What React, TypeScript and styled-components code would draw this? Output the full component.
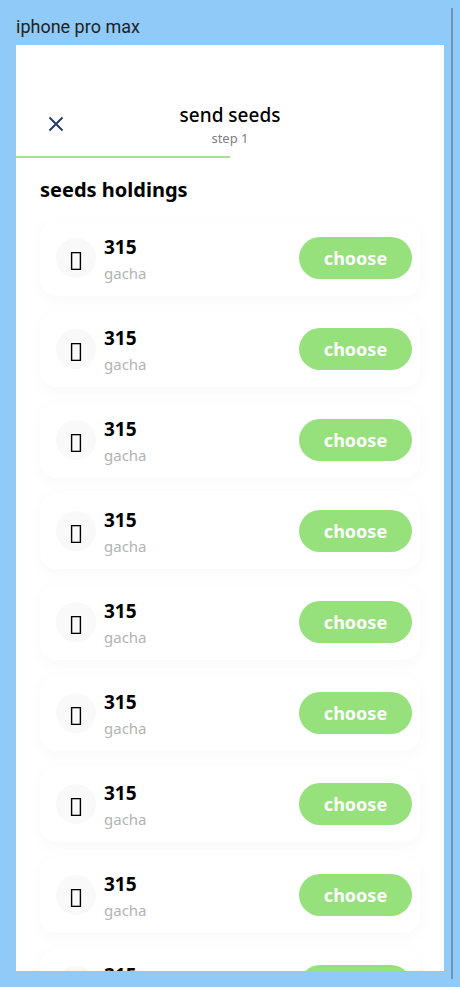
import React from "react";
import styled, { createGlobalStyle } from "styled-components";

const GlobalStyle = createGlobalStyle`
  *, *::before, *::after { box-sizing: border-box; }
  html, body { margin: 0; background: #90caf9; }
  body { font-family: "Noto Sans", "Open Sans", sans-serif; color: #000; }
  h1, h2, p, ul { margin: 0; padding: 0; }
`;

const Canvas = styled.div`
  height: 100vh;
  padding: 8px 7px 8px 8px;
`;

const Frame = styled.section`
  display: flex;
  flex-direction: column;
  height: 100%;
  padding: 8px 7px 8px 8px;
  border-right: 2px solid #6d95b8;
`;

const FrameLabel = styled.p`
  padding-bottom: 8px;
  font: 400 18px/21px Roboto, sans-serif;
  color: #212121;
`;

const Screen = styled.main`
  flex: 1;
  min-height: 0;
  overflow: hidden;
  background: #fff;
`;

const Header = styled.header`
  display: grid;
  grid-template-columns: 32px 1fr 32px;
  align-items: center;
  padding: 56px 24px 9px;
`;

const CloseButton = styled.button`
  display: grid;
  place-items: center;
  width: 32px;
  height: 32px;
  padding: 0;
  border: 0;
  background: none;
  color: #273c6d;
`;

const Heading = styled.div`
  text-align: center;
`;

const Title = styled.h1`
  font-size: 19px;
  font-weight: 500;
  line-height: 28px;
`;

const Step = styled.p`
  font-size: 13px;
  line-height: 18px;
  color: #808080;
`;

const Progress = styled.div<{ $value: number }>`
  width: ${(p) => p.$value}%;
  height: 2px;
  background: #a5e48f;
`;

const Content = styled.div`
  padding: 16px 24px;
`;

const SectionTitle = styled.h2`
  font-size: 20px;
  font-weight: 700;
  line-height: 32px;
`;

const List = styled.ul`
  display: flex;
  flex-direction: column;
  gap: 16px;
  padding-top: 15px;
  list-style: none;
`;

const Card = styled.li`
  display: flex;
  align-items: center;
  gap: 8px;
  padding: 11px 8px 13px 16px;
  border-radius: 16px;
  background: #fff;
  box-shadow: 0 4px 16px rgba(0, 0, 0, 0.03);
`;

const Avatar = styled.span`
  display: grid;
  place-items: center;
  width: 40px;
  height: 40px;
  padding-top: 6px;
  border-radius: 50%;
  background: #f9f9f9;
`;

const Details = styled.div`
  flex: 1;
`;

const Amount = styled.p`
  font-size: 19px;
  font-weight: 700;
  line-height: 31px;
`;

const SeedName = styled.p`
  font-size: 15px;
  line-height: 20px;
  color: #b3b3b3;
`;

const ChooseButton = styled.button`
  min-width: 113px;
  height: 42px;
  padding: 0 20px;
  border: 0;
  border-radius: 21px;
  background: #96e17c;
  color: #fff;
  font: 700 18px/26px "Noto Sans", "Open Sans", sans-serif;
`;

const holdings = Array.from({ length: 9 }, (_, id) => ({
  id,
  amount: 315,
  name: "gacha",
}));

const CloseIcon = () => (
  <svg width="16" height="16" viewBox="0 0 16 16" fill="none" aria-hidden="true">
    <path d="M1.5 1.5l13 13M14.5 1.5l-13 13" stroke="currentColor" strokeWidth="2" />
  </svg>
);

const SeedIcon = () => (
  <svg width="12" height="18" viewBox="0 0 12 18" fill="none" aria-hidden="true">
    <rect x="1.6" y="0.6" width="8.8" height="16.8" stroke="#000" strokeWidth="1.4" />
  </svg>
);

export default function App() {
  return (
    <>
      <GlobalStyle />
      <Canvas>
        <Frame>
          <FrameLabel>iphone pro max</FrameLabel>
          <Screen>
            <Header>
              <CloseButton type="button" aria-label="Close">
                <CloseIcon />
              </CloseButton>
              <Heading>
                <Title>send seeds</Title>
                <Step>step 1</Step>
              </Heading>
            </Header>
            <Progress $value={50} />
            <Content>
              <SectionTitle>seeds holdings</SectionTitle>
              <List>
                {holdings.map((seed) => (
                  <Card key={seed.id}>
                    <Avatar>
                      <SeedIcon />
                    </Avatar>
                    <Details>
                      <Amount>{seed.amount}</Amount>
                      <SeedName>{seed.name}</SeedName>
                    </Details>
                    <ChooseButton type="button">choose</ChooseButton>
                  </Card>
                ))}
              </List>
            </Content>
          </Screen>
        </Frame>
      </Canvas>
    </>
  );
}
